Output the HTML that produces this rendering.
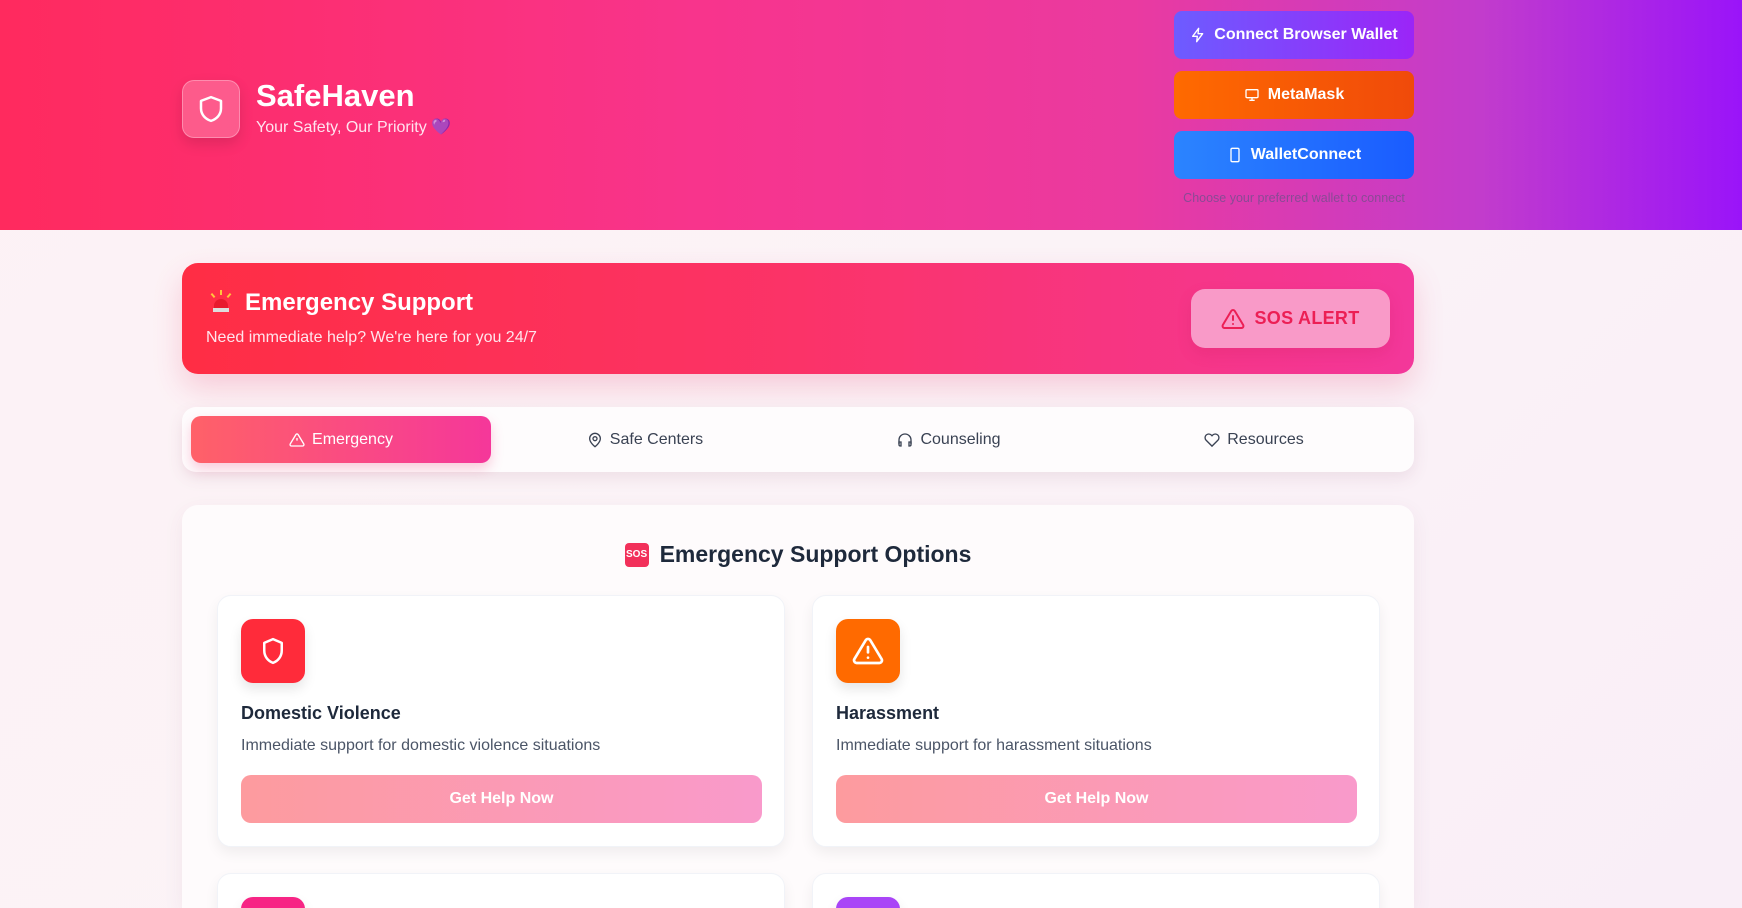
<!DOCTYPE html>
<html style="width:1742px;height:908px;overflow:hidden"><head><meta charset="utf-8">
<style>
*{box-sizing:border-box;margin:0;padding:0}
body{width:1742px;height:908px;overflow:hidden;font-family:"Liberation Sans",Arial,sans-serif;background:linear-gradient(135deg,#fdf2f5 0%,#fbf3f7 50%,#f9eef7 100%);position:relative}
.hdr{position:absolute;left:0;top:0;width:1742px;height:230px;background:linear-gradient(90deg,#ff2a5e 0%,#f8348c 40%,#ea3aa0 65%,#c23ccc 85%,#9a14f9 100%)}
.logo{position:absolute;left:182px;top:80px;width:58px;height:58px;border-radius:12px;background:rgba(255,255,255,.22);border:1px solid rgba(255,255,255,.3);box-shadow:0 6px 14px rgba(0,0,0,.12);display:flex;align-items:center;justify-content:center}
.title{position:absolute;left:256px;top:78px;color:#fff;font-size:31px;font-weight:700}
.sub{position:absolute;left:256px;top:117px;color:#ffe3ef;font-size:16px}
.wb{position:absolute;left:1174px;width:240px;height:48px;border-radius:8px;color:#fff;font-weight:700;font-size:16px;display:flex;align-items:center;justify-content:center;gap:8px}
.cap{position:absolute;left:1174px;width:240px;top:191px;text-align:center;font-size:12.5px;color:#8a4a95}
.banner{position:absolute;left:182px;top:263px;width:1232px;height:111px;border-radius:16px;background:linear-gradient(90deg,#ff2d44 0%,#fb3368 50%,#f3379a 100%);box-shadow:0 14px 30px rgba(230,50,100,.2)}
.bt{position:absolute;left:245px;top:289px;color:#fff;font-size:24px;font-weight:700}
.bs{position:absolute;left:206px;top:329px;color:#ffe5ec;font-size:16px}
.sos{position:absolute;left:1191px;top:289px;width:199px;height:59px;border-radius:14px;background:#f99ac8;color:#ec1f55;font-weight:700;font-size:18px;display:flex;align-items:center;justify-content:center;gap:9px;letter-spacing:.3px;box-shadow:0 6px 14px rgba(200,30,90,.2)}
.tabs{position:absolute;left:182px;top:407px;width:1232px;height:65px;border-radius:14px;background:#fefcfd;box-shadow:0 6px 16px rgba(120,60,90,.1)}
.tab{position:absolute;top:9px;width:300px;height:47px;display:flex;align-items:center;justify-content:center;gap:7px;font-size:16px;color:#3a4253}
.tab.act{background:linear-gradient(90deg,#ff6168,#f5379a);color:#fff;border-radius:10px;box-shadow:0 6px 12px rgba(240,60,120,.25)}
.main{position:absolute;left:182px;top:505px;width:1232px;height:403px;overflow:hidden;border-radius:16px 16px 0 0;background:#fefbfc;box-shadow:0 6px 20px rgba(120,60,90,.07)}
.mt{position:absolute;left:0;width:1232px;top:36px;text-align:center;font-size:23px;font-weight:700;color:#1e293b;display:flex;justify-content:center;align-items:center;gap:11px}
.card{position:absolute;width:568px;height:252px;border-radius:14px;background:#fff;border:1px solid #f1f3f8;box-shadow:0 6px 14px rgba(0,0,0,.06)}
.ic{position:absolute;left:23px;top:23px;width:64px;height:64px;border-radius:12px;display:flex;align-items:center;justify-content:center;box-shadow:0 6px 12px rgba(0,0,0,.1)}
.ct{position:absolute;left:23px;top:107px;font-size:18px;font-weight:700;color:#1e293b}
.cd{position:absolute;left:23px;top:141px;font-size:16px;color:#4b5567}
.cb{position:absolute;left:23px;top:179px;width:521px;height:48px;border-radius:10px;background:linear-gradient(90deg,#fd9b9e,#f99acb);color:#fff;font-weight:700;font-size:16px;display:flex;align-items:center;justify-content:center}
</style></head><body>
<div class="hdr"></div>
<div class="logo"><svg width="30" height="30" viewBox="0 0 24 24" fill="none" stroke="#fff" stroke-width="2" stroke-linejoin="round"><path d="M12 2.5l8 3v6c0 5-3.5 8.5-8 10-4.5-1.5-8-5-8-10v-6z"/></svg></div>
<div class="title">SafeHaven</div>
<div class="sub">Your Safety, Our Priority <span style="color:#9b59d0">💜</span></div>
<div class="wb" style="top:11px;background:linear-gradient(90deg,#6d5cff,#9b25f7)"><svg width="16" height="16" viewBox="0 0 24 24" fill="none" stroke="#fff" stroke-width="2" stroke-linejoin="round"><path d="M13 2L4 14h7l-1 8 9-12h-7z"/></svg>Connect Browser Wallet</div>
<div class="wb" style="top:71px;background:linear-gradient(90deg,#ff6a00,#f04a0a)"><svg width="16" height="16" viewBox="0 0 24 24" fill="none" stroke="#fff" stroke-width="2"><rect x="3" y="4" width="18" height="12" rx="1.5"/><path d="M8 20h8M12 16v4"/></svg>MetaMask</div>
<div class="wb" style="top:131px;background:linear-gradient(90deg,#2b84ff,#1a5cff)"><svg width="16" height="16" viewBox="0 0 24 24" fill="none" stroke="#fff" stroke-width="2"><rect x="6" y="2" width="12" height="20" rx="2"/><path d="M12 18h.01"/></svg>WalletConnect</div>
<div class="cap">Choose your preferred wallet to connect</div>

<div class="banner"></div>
<div style="position:absolute;left:210px;top:290px;width:22px;height:24px">
<div style="position:absolute;left:3px;top:18px;width:16px;height:4px;background:#ddd"></div>
<div style="position:absolute;left:4px;top:9px;width:14px;height:9px;border-radius:7px 7px 0 0;background:#e8192e"></div>
<div style="position:absolute;left:10px;top:0;width:2px;height:5px;background:#ffc53d"></div>
<div style="position:absolute;left:2px;top:3px;width:2px;height:5px;background:#ffc53d;transform:rotate(-40deg)"></div>
<div style="position:absolute;left:18px;top:3px;width:2px;height:5px;background:#ffc53d;transform:rotate(40deg)"></div>
</div>
<div class="bt">Emergency Support</div>
<div class="bs">Need immediate help? We're here for you 24/7</div>
<div class="sos"><svg width="24" height="24" viewBox="0 0 24 24" fill="none" stroke="#ec1f55" stroke-width="2" stroke-linejoin="round" stroke-linecap="round"><path d="M10.3 3.9L1.8 18a2 2 0 001.7 3h17a2 2 0 001.7-3L13.7 3.9a2 2 0 00-3.4 0z"/><path d="M12 9v4M12 17h.01"/></svg>SOS ALERT</div>

<div class="tabs">
<div class="tab act" style="left:9px"><svg width="16" height="16" viewBox="0 0 24 24" fill="none" stroke="#fff" stroke-width="2" stroke-linejoin="round"><path d="M10.3 3.9L1.8 18a2 2 0 001.7 3h17a2 2 0 001.7-3L13.7 3.9a2 2 0 00-3.4 0z"/><path d="M12 9v4M12 17h.01"/></svg>Emergency</div>
<div class="tab" style="left:313px"><svg width="16" height="16" viewBox="0 0 24 24" fill="none" stroke="#3a4253" stroke-width="2"><path d="M20 10c0 6-8 12-8 12s-8-6-8-12a8 8 0 0116 0z"/><circle cx="12" cy="10" r="3"/></svg>Safe Centers</div>
<div class="tab" style="left:617px"><svg width="16" height="16" viewBox="0 0 24 24" fill="none" stroke="#3a4253" stroke-width="2"><path d="M3 18v-6a9 9 0 0118 0v6"/><path d="M21 19a2 2 0 01-2 2h-1v-6h3zM3 19a2 2 0 002 2h1v-6H3z"/></svg>Counseling</div>
<div class="tab" style="left:922px"><svg width="16" height="16" viewBox="0 0 24 24" fill="none" stroke="#3a4253" stroke-width="2"><path d="M20.8 4.6a5.5 5.5 0 00-7.8 0L12 5.7l-1-1.1a5.5 5.5 0 00-7.8 7.8L12 21.2l8.8-8.8a5.5 5.5 0 000-7.8z"/></svg>Resources</div>
</div>

<div class="main">
<div class="mt"><span style="display:inline-block;width:24px;height:24px;border-radius:4px;background:#f2305a;color:#fff;font-size:10px;font-weight:700;line-height:24px;text-align:center">SOS</span>Emergency Support Options</div>
<div class="card" style="left:35px;top:90px">
<div class="ic" style="background:#ff2b3a"><svg width="30" height="30" viewBox="0 0 24 24" fill="none" stroke="#fff" stroke-width="2" stroke-linejoin="round"><path d="M12 2.5l7 3v6c0 5-3 8.5-7 10-4-1.5-7-5-7-10v-6z"/></svg></div>
<div class="ct">Domestic Violence</div>
<div class="cd">Immediate support for domestic violence situations</div>
<div class="cb">Get Help Now</div>
</div>
<div class="card" style="left:630px;top:90px">
<div class="ic" style="background:#ff6a00"><svg width="32" height="32" viewBox="0 0 24 24" fill="none" stroke="#fff" stroke-width="2" stroke-linejoin="round" stroke-linecap="round"><path d="M10.3 3.9L1.8 18a2 2 0 001.7 3h17a2 2 0 001.7-3L13.7 3.9a2 2 0 00-3.4 0z"/><path d="M12 9v4M12 17h.01"/></svg></div>
<div class="ct">Harassment</div>
<div class="cd">Immediate support for harassment situations</div>
<div class="cb">Get Help Now</div>
</div>
<div class="card" style="left:35px;top:368px"><div class="ic" style="background:#f72585"></div></div>
<div class="card" style="left:630px;top:368px"><div class="ic" style="background:#a945f7"></div></div>
</div>
</body></html>
